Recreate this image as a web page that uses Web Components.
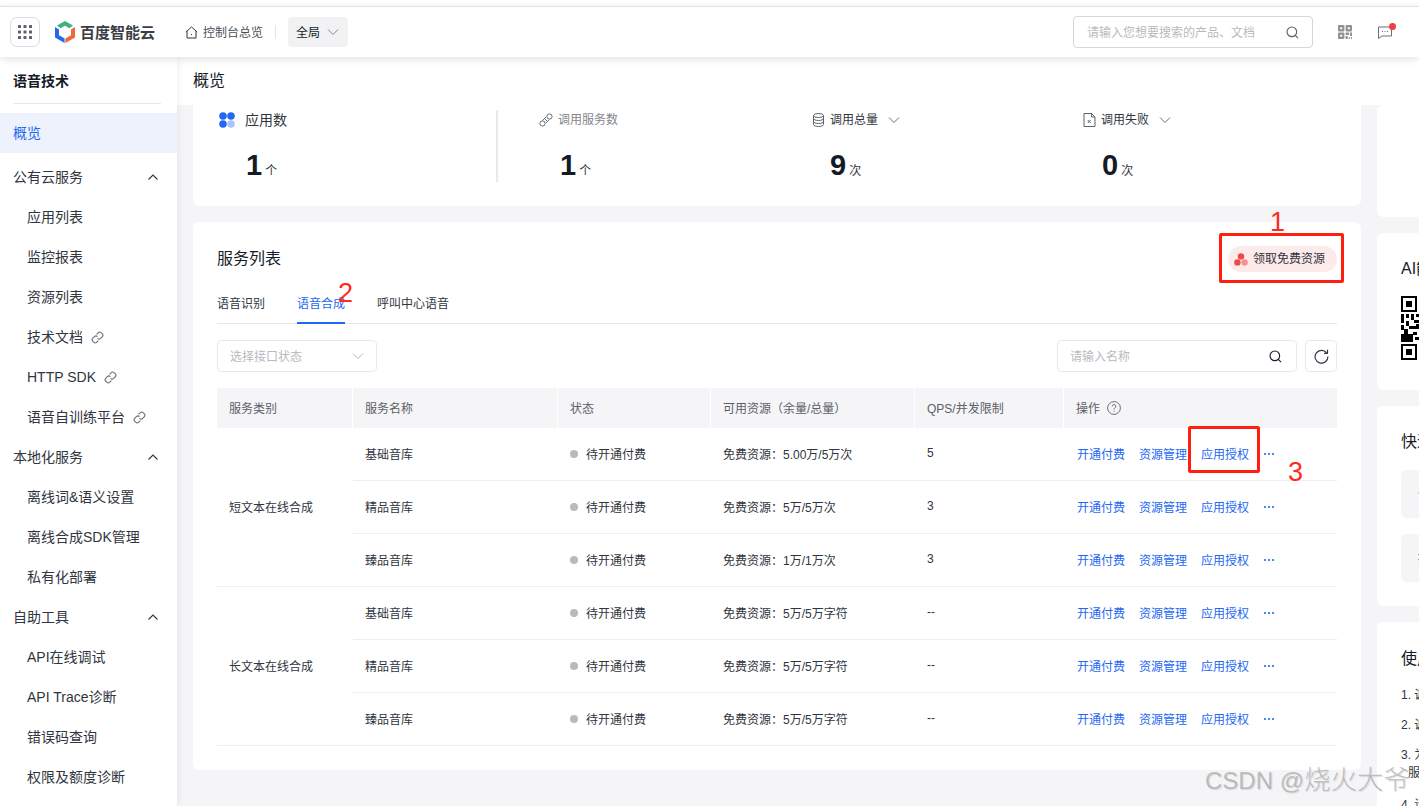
<!DOCTYPE html>
<html lang="zh">
<head>
<meta charset="utf-8">
<title>语音技术 - 概览</title>
<style>
  html, body { margin: 0; height: 100%; overflow: hidden; background: #fff; }
  body { font-family: "Liberation Sans", "Noto Sans CJK SC", sans-serif; font-size: 12px; color: #151b26; }
  .page { position: relative; display: flex; flex-direction: column; height: 806px; overflow: hidden; }
  .body-row { display: flex; flex: 1; min-height: 0; }
  .content { flex: 1; min-width: 0; display: flex; flex-direction: column; }
  .scroll { flex: 1; min-height: 0; display: flex; gap: 16px; padding-left: 16px; background: #f5f5f8; overflow: hidden; }
  .col-left { width: 1168px; flex: none; display: flex; flex-direction: column; gap: 16px; }
  .col-right { width: 300px; flex: none; display: flex; flex-direction: column; gap: 16px; }
</style>
</head>
<body>
<div class="page">
  <top-bar></top-bar>
  <div class="body-row">
    <side-nav></side-nav>
    <div class="content">
      <page-title>概览</page-title>
      <div class="scroll">
        <div class="col-left">
          <stats-card></stats-card>
          <service-card></service-card>
        </div>
        <div class="col-right">
          <side-card kind="blank"></side-card>
          <side-card kind="qr"></side-card>
          <side-card kind="quick"></side-card>
          <side-card kind="guide"></side-card>
        </div>
      </div>
    </div>
  </div>
  <page-marks></page-marks>
</div>

<script>
const CHEVRON_DOWN = '<svg width="12" height="12" viewBox="0 0 12 12" fill="none" stroke="currentColor" stroke-width="1"><path d="M1 3.5l5 5 5-5"/></svg>';
const CHEVRON_UP = '<svg width="12" height="12" viewBox="0 0 12 12" fill="none" stroke="currentColor" stroke-width="1.1"><path d="M1.5 8.5L6 4l4.5 4.5"/></svg>';
const LINK_ICON = '<svg width="13" height="13" viewBox="0 0 13 13" fill="none" stroke="#6a6f7a" stroke-width="1.1"><path d="M5.6 3.4l1.6-1.6a2.2 2.2 0 0 1 3.1 0l.9.9a2.2 2.2 0 0 1 0 3.1L9.6 7.4a2.2 2.2 0 0 1-3.1 0"/><path d="M7.4 9.6l-1.6 1.6a2.2 2.2 0 0 1-3.1 0l-.9-.9a2.2 2.2 0 0 1 0-3.1l1.6-1.6a2.2 2.2 0 0 1 3.1 0"/></svg>';
const SEARCH_ICON = '<svg width="13" height="13" viewBox="0 0 14 14" fill="none" stroke="currentColor" stroke-width="1.2"><circle cx="6.3" cy="6.3" r="5.2"/><path d="M10 10l3 3"/></svg>';

// Top header
class TopBar extends HTMLElement {
  constructor() {
    super();
    const shadowRoot = this.attachShadow({ mode: "open" });
    shadowRoot.innerHTML = `
      <style>
        :host { display: block; position: relative; z-index: 3; flex: none; padding-top: 6px; background: #fff; }
        .bar { height: 50px; border-top: 1px solid #e2e2e6; display: flex; align-items: center; background: #fff; box-shadow: 0 2px 8px rgba(7,12,20,.12); }
        .apps { width: 30px; height: 30px; margin-left: 10px; border: 1px solid #dcdce0; border-radius: 7px; box-sizing: border-box; display: flex; align-items: center; justify-content: center; }
        .logo { display: flex; align-items: center; margin-left: 15px; gap: 5px; }
        .logo span { font-size: 15px; font-weight: 700; color: #3a3e45; width: 75px; padding-bottom: 2px; }
        .home { display: flex; align-items: center; margin-left: 30px; gap: 5px; color: #4a4f5a; }
        .home span, .scope span, .search span { padding-bottom: 2px; }
        .sep { width: 1px; height: 14px; background: #e4e4e8; margin: 0 12px; }
        .scope { width: 60px; height: 30px; box-sizing: border-box; padding-left: 8px; display: flex; align-items: center; gap: 7px; background: #f2f2f5; border-radius: 4px; color: #151b26; }
        .scope svg { color: #84868c; }
        .grow { flex: 1; }
        .search { width: 240px; height: 32px; box-sizing: border-box; border: 1px solid #d4d6d9; border-radius: 4px; display: flex; align-items: center; padding: 0 13px; color: #b8bac0; }
        .search span { flex: 1; }
        .search svg { color: #5c5f66; }
        .qr { margin-left: 25px; display: flex; }
        .msg { position: relative; margin: 0 27px 0 26px; display: flex; }
        .msg i { position: absolute; width: 7px; height: 7px; right: -4px; top: -3px; border-radius: 50%; background: #f33e3e; }
      </style>
      <div class="bar">
        <div class="apps">
          <svg width="14" height="14" viewBox="0 0 14 14" fill="#5f6269">
            <rect x="0" y="0" width="3" height="3" rx=".6"/><rect x="5.5" y="0" width="3" height="3" rx=".6"/><rect x="11" y="0" width="3" height="3" rx=".6"/>
            <rect x="0" y="5.5" width="3" height="3" rx=".6"/><rect x="5.5" y="5.5" width="3" height="3" rx=".6"/><rect x="11" y="5.5" width="3" height="3" rx=".6"/>
            <rect x="0" y="11" width="3" height="3" rx=".6"/><rect x="5.5" y="11" width="3" height="3" rx=".6"/><rect x="11" y="11" width="3" height="3" rx=".6"/>
          </svg>
        </div>
        <div class="logo">
          <svg width="20" height="22" viewBox="0 0 20 22">
            <path d="M10 0l8 4.6-3.6 2.6L10 4.8 5.6 7.2 2 4.6z" fill="#3fb27f"/>
            <path d="M0 6l4 2.6v5.6l5.6 3.2V22L0 16.4z" fill="#2468f2"/>
            <path d="M20 6l-4 2.6v5.6l-5.6 3.2V22L20 16.4z" fill="#f0673c"/>
          </svg>
          <span>百度智能云</span>
        </div>
        <div class="home">
          <svg width="13" height="13" viewBox="0 0 13 13" fill="none" stroke="#303540" stroke-width="1"><path d="M.8 6L6.5 1l5.7 5M2 5.2V12h9V5.2"/><path d="M6 8.5h1"/></svg>
          <span>控制台总览</span>
        </div>
        <div class="sep"></div>
        <div class="scope"><span>全局</span>${CHEVRON_DOWN}</div>
        <div class="grow"></div>
        <div class="search"><span>请输入您想要搜索的产品、文档</span>${SEARCH_ICON}</div>
        <div class="qr">
          <svg width="14" height="14" viewBox="0 0 14 14" fill="#8f9197">
            <path d="M1 0h4.4a1 1 0 0 1 1 1v4.4a1 1 0 0 1-1 1H1a1 1 0 0 1-1-1V1a1 1 0 0 1 1-1zM2.2 2.2v2h2v-2zM8.6 0H13a1 1 0 0 1 1 1v4.4a1 1 0 0 1-1 1H8.6a1 1 0 0 1-1-1V1a1 1 0 0 1 1-1zM9.8 2.2v2h2v-2zM1 7.6h4.4a1 1 0 0 1 1 1V13a1 1 0 0 1-1 1H1a1 1 0 0 1-1-1V8.6a1 1 0 0 1 1-1zM2.2 9.8v2h2v-2z" fill-rule="evenodd"/>
            <path d="M7.6 7.6h3.4v2.4H7.6zM12 7.6h2v3.4h-2zM7.6 11h2.2v3H7.6zM10.8 12h1v2h-1zM13 12h1v2h-1z"/>
          </svg>
        </div>
        <div class="msg">
          <svg width="14" height="13" viewBox="0 0 14 13" fill="none" stroke="#6a6f7a" stroke-width="1"><path d="M.5 1h13v9H4l-3.5 2.5z"/><path d="M4 5.5h1M6.5 5.5h1M9 5.5h1" stroke-width="1.2"/></svg>
          <i></i>
        </div>
      </div>
    `;
  }
}
customElements.define("top-bar", TopBar);

// One row of the left menu
class NavItem extends HTMLElement {
  constructor() {
    super();
    const shadowRoot = this.attachShadow({ mode: "open" });
    const open = this.hasAttribute("group") ? CHEVRON_UP : "";
    const link = this.hasAttribute("link") ? `<span class="lk">${LINK_ICON}</span>` : "";
    shadowRoot.innerHTML = `
      <style>
        :host { display: flex; align-items: center; height: 40px; box-sizing: border-box; padding-left: 27px; font-size: 14px; line-height: 20px; color: #303540; }
        :host([group]), :host([active]) { padding-left: 13px; }
        :host([active]) { background: #edf2fd; color: #2468f2; margin-bottom: 4px; }
        .lk { display: flex; margin-left: 8px; }
        .arrow { margin-left: auto; margin-right: 18px; display: flex; color: #303540; }
      </style>
      <span><slot></slot></span>${link}<span class="arrow">${open}</span>
    `;
  }
}
customElements.define("nav-item", NavItem);

// Left menu
class SideNav extends HTMLElement {
  constructor() {
    super();
    const shadowRoot = this.attachShadow({ mode: "open" });
    shadowRoot.innerHTML = `
      <style>
        :host { display: block; position: relative; z-index: 2; width: 177px; flex: none; background: #fff; box-shadow: 2px 0 6px rgba(7,12,20,.05); overflow: hidden; }
        h2 { margin: 0 16px 9px 13px; height: 47px; line-height: 48px; box-sizing: border-box; font-size: 14px; font-weight: 700; color: #151b26; border-bottom: 1px solid #e8e9eb; }
      </style>
      <h2>语音技术</h2>
      <nav-item active>概览</nav-item>
      <nav-item group>公有云服务</nav-item>
      <nav-item>应用列表</nav-item>
      <nav-item>监控报表</nav-item>
      <nav-item>资源列表</nav-item>
      <nav-item link>技术文档</nav-item>
      <nav-item link>HTTP SDK</nav-item>
      <nav-item link>语音自训练平台</nav-item>
      <nav-item group>本地化服务</nav-item>
      <nav-item>离线词&amp;语义设置</nav-item>
      <nav-item>离线合成SDK管理</nav-item>
      <nav-item>私有化部署</nav-item>
      <nav-item group>自助工具</nav-item>
      <nav-item>API在线调试</nav-item>
      <nav-item>API Trace诊断</nav-item>
      <nav-item>错误码查询</nav-item>
      <nav-item>权限及额度诊断</nav-item>
    `;
  }
}
customElements.define("side-nav", SideNav);

class PageTitle extends HTMLElement {
  constructor() {
    super();
    const shadowRoot = this.attachShadow({ mode: "open" });
    shadowRoot.innerHTML = `
      <style>
        :host { display: flex; align-items: center; flex: none; height: 48px; padding-left: 16px; padding-bottom: 4px; box-sizing: border-box; background: #fff; font-size: 16px; color: #151b26; }
      </style>
      <slot></slot>
    `;
  }
}
customElements.define("page-title", PageTitle);

// One figure of the overview card
class StatItem extends HTMLElement {
  constructor() {
    super();
    const shadowRoot = this.attachShadow({ mode: "open" });
    const menu = this.hasAttribute("menu") ? `<span class="more">${CHEVRON_DOWN}</span>` : "";
    shadowRoot.innerHTML = `
      <style>
        :host { display: block; box-sizing: border-box; }
        .head { display: flex; align-items: center; height: 16px; gap: 5px; color: var(--label, #303540); font-size: var(--label-size, 12px); }
        .head > span:nth-of-type(1) { padding-bottom: 3px; }
        .more { display: flex; margin-left: 5px; color: #6a6f7a; }
        .num { display: flex; align-items: baseline; margin-top: 21px; padding-left: var(--indent, 20px); gap: 3px; }
        b { font-size: 29px; line-height: 32px; font-weight: 700; font-family: "Liberation Sans", sans-serif; color: #151b26; }
        span.u { font-size: 12px; color: #303540; }
        ::slotted(svg) { flex: none; }
      </style>
      <div class="head"><slot name="icon"></slot><span>${this.getAttribute("label")}</span>${menu}</div>
      <div class="num"><b>${this.getAttribute("value")}</b><span class="u">${this.getAttribute("unit")}</span></div>
    `;
  }
}
customElements.define("stat-item", StatItem);

class StatsCard extends HTMLElement {
  constructor() {
    super();
    const shadowRoot = this.attachShadow({ mode: "open" });
    shadowRoot.innerHTML = `
      <style>
        :host { display: flex; flex: none; height: 101px; box-sizing: border-box; padding: 7px 0 0 26px; background: #fff; border-radius: 0 0 6px 6px; }
        .first { width: 279px; flex: none; box-sizing: border-box; border-right: 2px solid #e8e9eb; height: 72px; margin-top: -2px; padding-top: 2px; --label-size: 14px; --indent: 27px; }
        .second { width: 314px; flex: none; box-sizing: border-box; padding-left: 41px; --label: #84868c; --indent: 21px; }
        .third { width: 271px; flex: none; --indent: 18px; }
        .fourth { flex: 1; --indent: 19px; }
        stat-item { height: 72px; }
      </style>
      <stat-item class="first" label="应用数" value="1" unit="个">
        <svg slot="icon" width="21" height="16" viewBox="0 0 21 16"><circle cx="4" cy="4" r="3.8" fill="#2468f2"/><circle cx="12" cy="4" r="3.8" fill="#2468f2"/><circle cx="4" cy="12" r="3.8" fill="#2468f2"/><circle cx="12" cy="12" r="3.8" fill="#a8c6fa"/></svg>
      </stat-item>
      <stat-item class="second" label="调用服务数" value="1" unit="个">
        <svg slot="icon" width="14" height="14" viewBox="0 0 14 14" fill="none" stroke="#6a6f7a" stroke-width="1"><circle cx="3.5" cy="10.5" r="2.6"/><circle cx="10.5" cy="3.5" r="2.6"/><path d="M5 5l4 4M3.5 7.5L7 4M7 10l3.5-3.5"/></svg>
      </stat-item>
      <stat-item class="third" label="调用总量" value="9" unit="次" menu>
        <svg slot="icon" width="13" height="14" viewBox="0 0 13 14" fill="none" stroke="#5f6269" stroke-width="1"><ellipse cx="6.5" cy="2.5" rx="5" ry="2"/><path d="M1.5 2.5v9c0 1.1 2.2 2 5 2s5-.9 5-2v-9M1.5 5.5c0 1.1 2.2 2 5 2s5-.9 5-2M1.5 8.5c0 1.1 2.2 2 5 2s5-.9 5-2"/></svg>
      </stat-item>
      <stat-item class="fourth" label="调用失败" value="0" unit="次" menu>
        <svg slot="icon" width="13" height="14" viewBox="0 0 12 14" fill="none" stroke="#5f6269" stroke-width="1"><path d="M.5.5h7.5l3.5 3.5v9.5H.5zM8 .5V4h3.5"/><path d="M4.2 7l3 3M7.2 7l-3 3"/></svg>
      </stat-item>
    `;
  }
}
customElements.define("stats-card", StatsCard);

// Grid of services, rows come from a list
class ServiceTable extends HTMLElement {
  constructor() {
    super();
    const shadowRoot = this.attachShadow({ mode: "open" });
    const groups = [
      ["短文本在线合成", [["基础音库", "免费资源：5.00万/5万次", "5"], ["精品音库", "免费资源：5万/5万次", "3"], ["臻品音库", "免费资源：1万/1万次", "3"]]],
      ["长文本在线合成", [["基础音库", "免费资源：5万/5万字符", "--"], ["精品音库", "免费资源：5万/5万字符", "--"], ["臻品音库", "免费资源：5万/5万字符", "--"]]],
    ];
    let rows = "";
    groups.forEach((group) => {
      rows += `<div class="c cat" style="grid-row: span 3">${group[0]}</div>`;
      group[1].forEach((row) => {
        rows += `
          <div class="c">${row[0]}</div>
          <div class="c state"><i></i>待开通付费</div>
          <div class="c">${row[1]}</div>
          <div class="c">${row[2]}</div>
          <div class="c ops"><a>开通付费</a><a>资源管理</a><a>应用授权</a>
            <svg width="12" height="4" viewBox="0 0 12 4" fill="#2468f2"><circle cx="2" cy="2" r="1.1"/><circle cx="6" cy="2" r="1.1"/><circle cx="10" cy="2" r="1.1"/></svg>
          </div>`;
      });
    });
    shadowRoot.innerHTML = `
      <style>
        :host { display: grid; grid-template-columns: 136px 205px 153px 204px 149px 273px; grid-template-rows: 40px repeat(6, 53px); font-size: 12px; color: #303540; }
        .h { display: flex; align-items: center; padding: 0 0 2px 12px; background: #f5f5f8; color: #5c5f66; border-right: 1px solid #fff; }
        .h.last { border-right: 0; }
        .h svg { margin: 2px 0 0 7px; }
        .c { display: flex; align-items: center; padding: 0 0 2px 12px; border-bottom: 1px solid #eeeef0; }
        .state i { width: 8px; height: 8px; margin: 2px 8px 0 0; border-radius: 50%; background: #b8bac0; }
        .ops { padding-left: 13px; gap: 14px; }
        .ops svg { margin-top: 2px; }
        .ops a { color: #2468f2; }
      </style>
      <div class="h">服务类别</div>
      <div class="h">服务名称</div>
      <div class="h">状态</div>
      <div class="h">可用资源（余量/总量）</div>
      <div class="h">QPS/并发限制</div>
      <div class="h last">操作
        <svg width="14" height="14" viewBox="0 0 14 14" fill="none" stroke="#6a6f7a" stroke-width="1"><circle cx="7" cy="7" r="6.4"/><path d="M5.2 5.4a1.8 1.8 0 1 1 2.6 1.6c-.6.3-.8.7-.8 1.3M7 9.6v1.1"/></svg>
      </div>
      ${rows}
    `;
  }
}
customElements.define("service-table", ServiceTable);

class ServiceCard extends HTMLElement {
  constructor() {
    super();
    const shadowRoot = this.attachShadow({ mode: "open" });
    shadowRoot.innerHTML = `
      <style>
        :host { display: block; flex: none; height: 548px; box-sizing: border-box; padding: 24px 24px 0; background: #fff; border-radius: 6px; }
        .top { display: flex; justify-content: space-between; align-items: center; height: 26px; }
        h3 { margin: 0 0 4px; font-size: 16px; font-weight: 400; color: #151b26; }
        .free { display: flex; align-items: center; gap: 5px; height: 26px; width: 109px; box-sizing: border-box; padding-left: 6px; background: #fdeaea; border-radius: 13px; color: #303540; }
        .free span { padding-bottom: 3px; }
        .tabs { display: flex; gap: 32px; margin-top: 11px; height: 41px; box-sizing: border-box; border-bottom: 1px solid #e8e9eb; }
        .tabs span { height: 40px; line-height: 42px; box-sizing: border-box; color: #303540; }
        .tabs .on { color: #2468f2; border-bottom: 2px solid #2468f2; height: 41px; }
        .filters { display: flex; align-items: center; margin: 16px 0; height: 32px; }
        .box { height: 32px; box-sizing: border-box; border: 1px solid #e8e9eb; border-radius: 4px; display: flex; align-items: center; justify-content: space-between; padding: 0 12px; color: #b8bac0; }
        .box > span:first-child { padding-bottom: 2px; }
        .select { width: 160px; }
        .name { width: 240px; margin-left: auto; color: #b8bac0; padding-right: 14px; }
        .name svg { color: #151b26; }
        .refresh { width: 32px; margin-left: 8px; padding: 0; justify-content: center; }
      </style>
      <div class="top">
        <h3>服务列表</h3>
        <div class="free">
          <svg width="14" height="13" viewBox="0 0 14 13"><circle cx="7" cy="3.4" r="3.2" fill="#f04848"/><circle cx="3.4" cy="9.4" r="3.2" fill="#f04848"/><circle cx="10.6" cy="9.4" r="3.2" fill="#f59090"/></svg>
          <span>领取免费资源</span>
        </div>
      </div>
      <div class="tabs"><span>语音识别</span><span class="on">语音合成</span><span>呼叫中心语音</span></div>
      <div class="filters">
        <div class="box select"><span>选择接口状态</span><span style="display:flex;color:#b8bac0">${CHEVRON_DOWN}</span></div>
        <div class="box name"><span>请输入名称</span>${SEARCH_ICON}</div>
        <div class="box refresh">
          <svg width="15" height="15" viewBox="0 0 14 14" fill="none" stroke="#303540" stroke-width="1.1"><path d="M11.8 3.6A6 6 0 1 0 13 7"/><path d="M12.6 .8v3.2H9.4" stroke-linejoin="round"/></svg>
        </div>
      </div>
      <service-table></service-table>
    `;
  }
}
customElements.define("service-card", ServiceCard);

// Right column cards, most of them run off the window
class SideCard extends HTMLElement {
  constructor() {
    super();
    const shadowRoot = this.attachShadow({ mode: "open" });
    const kind = this.getAttribute("kind");
    let inner = "";
    if (kind === "qr") {
      inner = `<h4 style="margin-top:25px">AI能力体验</h4>
        <svg class="code" width="64" height="64" viewBox="0 0 64 64" shape-rendering="crispEdges" fill="#000">
          <path fill-rule="evenodd" d="M0 0h16v16H0zM2 2v12h12V2zM0 48h16v16H0zM2 50v12h12V50z"/>
          <path d="M5 5h6v6H5zM5 53h6v6H5z"/>
          <path d="M0 18h3v9H0zM5 18h3v4H5zM10 18h3v6h-3zM15 18h3v3h-3zM13 24h5v3h-5zM5 25h3v5H5zM0 29h3v5H0zM8 30h7v3H8zM15 28h3v5h-3zM3 33h4v5H3zM0 38h12v8H0zM12 36h4v3h-4zM14 41h4v3h-4z"/>
        </svg>`;
    } else if (kind === "quick") {
      inner = `<h4 style="margin-top:25px">快速入门</h4><div class="tile">创建应用</div><div class="tile">接口文档</div>`;
    } else if (kind === "guide") {
      inner = `<h4 style="margin-top:26px">使用说明</h4>
        <p style="margin-top:17px">1. 调用服务前请先创建应用</p>
        <p style="margin-top:13px">2. 调用接口前请先查看文档</p>
        <p style="margin-top:12px;line-height:18px">3. 为确保服务可用请先开通<br><span style="padding-left:7px">服务</span></p>
        <p style="margin-top:15px">4. 请合理使用资源</p>`;
    }
    shadowRoot.innerHTML = `
      <style>
        :host { display: block; box-sizing: border-box; flex: none; padding-left: 24px; background: #fff; border-radius: 6px; overflow: hidden; }
        :host([kind="blank"]) { height: 112px; }
        :host([kind="qr"]) { height: 157px; }
        :host([kind="quick"]) { height: 200px; }
        :host([kind="guide"]) { height: 300px; }
        h4 { margin: 0; font-size: 16px; font-weight: 400; line-height: 22px; color: #151b26; white-space: nowrap; }
        .code { display: block; margin-top: 16px; }
        .tile { height: 48px; margin-top: 16px; width: 260px; background: #f5f5f8; border-radius: 6px; line-height: 48px; padding-left: 17px; box-sizing: border-box; font-size: 14px; color: #151b26; }
        h4 + .tile { margin-top: 17px; }
        p { margin: 0; font-size: 12px; line-height: 17px; color: #303540; white-space: nowrap; }
      </style>
      ${inner}
    `;
  }
}
customElements.define("side-card", SideCard);

// Red hand-drawn marks and the watermark, they lie over the page
class PageMarks extends HTMLElement {
  constructor() {
    super();
    const shadowRoot = this.attachShadow({ mode: "open" });
    shadowRoot.innerHTML = `
      <style>
        :host { position: absolute; inset: 0; z-index: 5; pointer-events: none; }
        .box { position: absolute; box-sizing: border-box; border: 3px solid #ff1f10; border-radius: 2px; }
        .n { position: absolute; font-family: "Liberation Sans", sans-serif; font-size: 27px; line-height: 30px; color: #ff2a1c; }
        .wm { position: absolute; left: 1205px; top: 764px; font-size: 24px; line-height: 32px; white-space: nowrap; color: rgba(160,160,160,.6); text-shadow: 1px 1px 1px rgba(150,150,150,.3); }
        .wm span { font-size: 26.5px; font-weight: 300; }
      </style>
      <div class="box" style="left:1219px;top:233px;width:125px;height:50px"></div>
      <div class="box" style="left:1188px;top:426px;width:72px;height:47px"></div>
      <span class="n" style="left:1270px;top:207px">1</span>
      <span class="n" style="left:338px;top:278px">2</span>
      <span class="n" style="left:1288px;top:457px">3</span>
      <span class="wm">CSDN @<span>烧火大爷</span></span>
    `;
  }
}
customElements.define("page-marks", PageMarks);
</script>
</body>
</html>
